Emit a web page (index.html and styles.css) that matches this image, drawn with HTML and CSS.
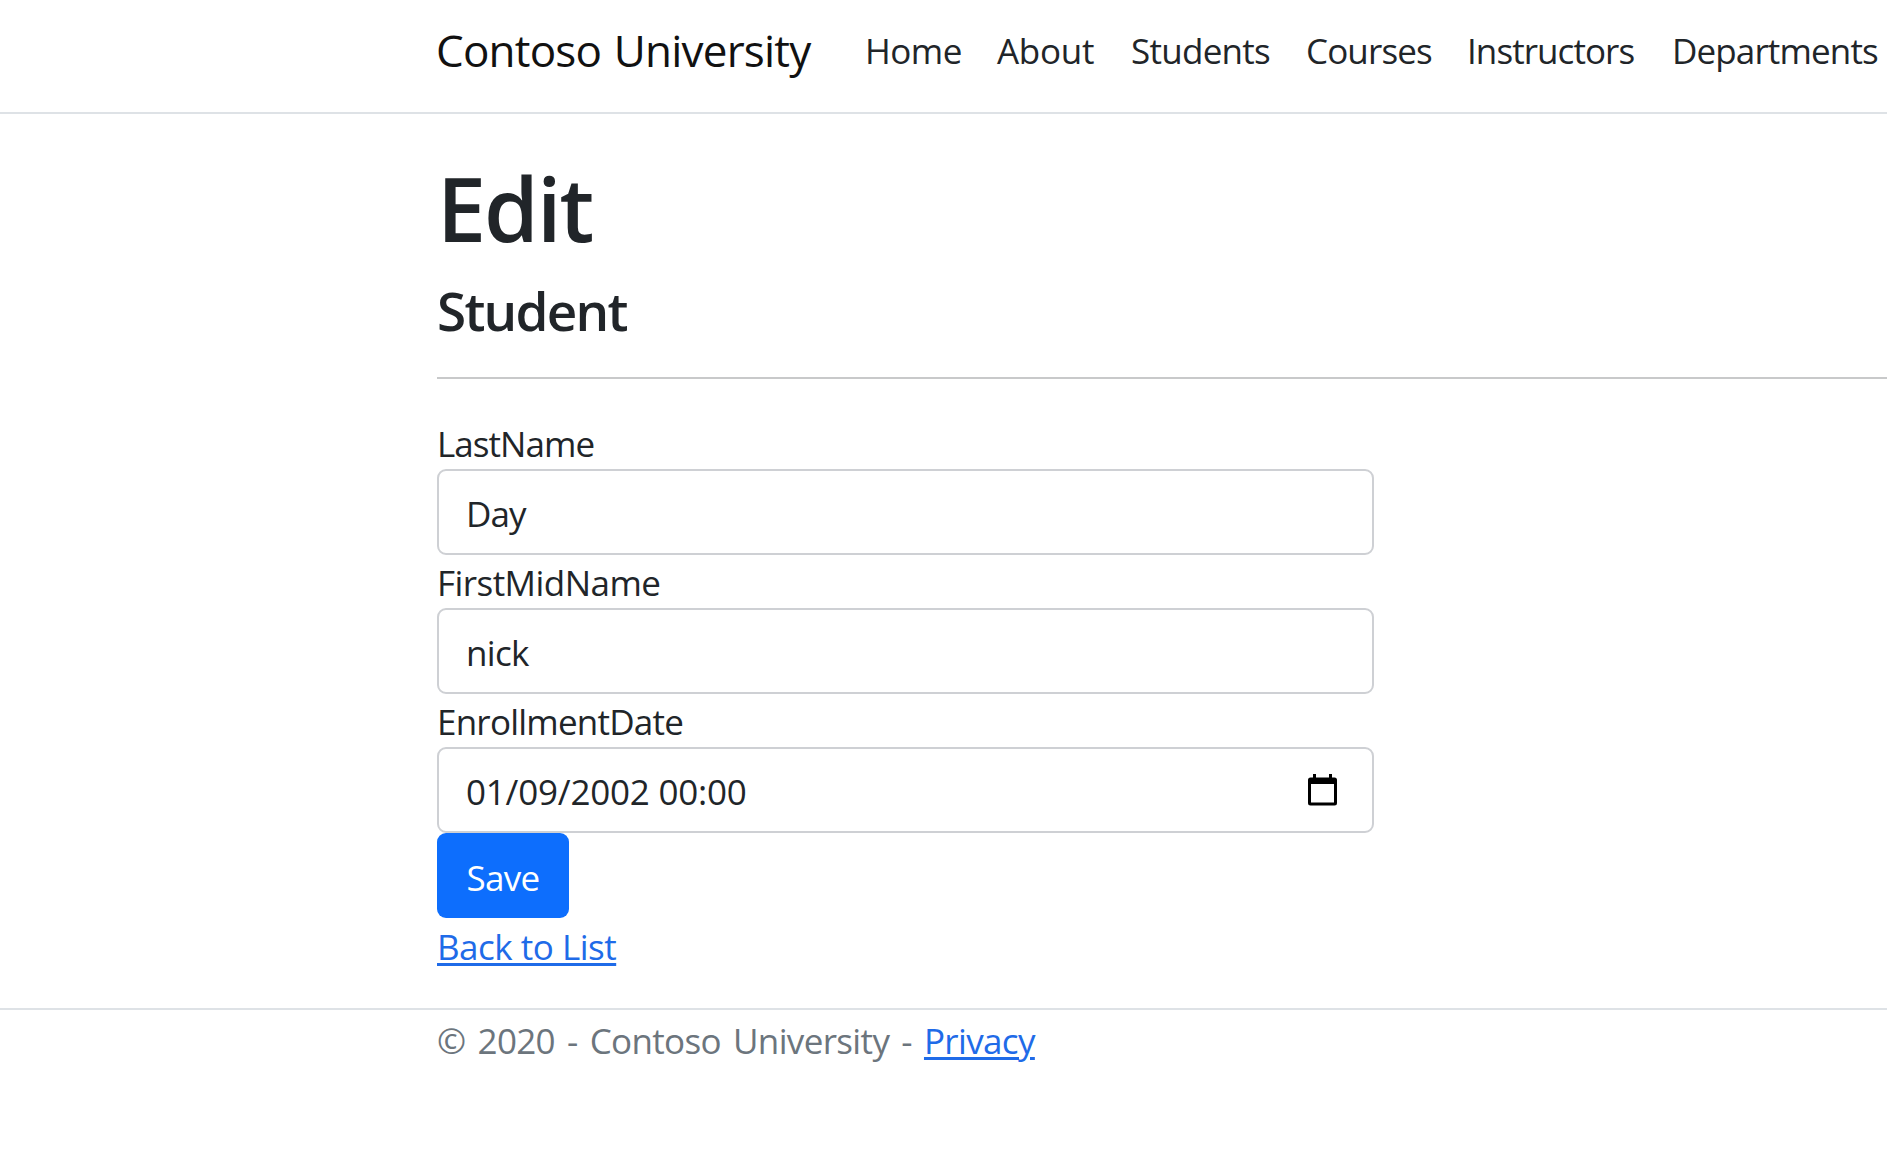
FILE: index.html
```
<!DOCTYPE html>
<html lang="en">
<head>
<meta charset="utf-8">
<title>Edit - Contoso University</title>
<link rel="stylesheet" href="styles.css">
</head>
<body>
<header class="navbar">
  <a class="brand" href="#">Contoso University</a>
  <nav class="nav">
    <a class="nav-home" href="#">Home</a>
    <a class="nav-about" href="#">About</a>
    <a class="nav-students" href="#">Students</a>
    <a class="nav-courses" href="#">Courses</a>
    <a class="nav-instructors" href="#">Instructors</a>
    <a class="nav-departments" href="#">Departments</a>
  </nav>
</header>
<main class="content">
  <h1 class="title">Edit</h1>
  <h4 class="subtitle">Student</h4>
  <hr class="rule">
  <form class="form">
    <label class="label label-last" for="last">LastName</label>
    <div class="control"><input class="field field-last" id="last" value="Day"></div>
    <label class="label label-first" for="first">FirstMidName</label>
    <div class="control"><input class="field field-first" id="first" value="nick"></div>
    <label class="label label-date" for="date">EnrollmentDate</label>
    <div class="control">
      <input class="field field-date" id="date" value="01/09/2002 00:00">
      <svg class="calendar" viewBox="0 0 29 32" aria-hidden="true">
        <path fill-rule="evenodd" d="M5 0h3v3.500h13V0h3v3.500h2.500q2.500 0 2.500 2.500v23q0 2.500-2.500 2.500h-24Q0 31.500 0 29V6q0-2.500 2.500-2.500H5zM3 10v18.500h23V10z"/>
      </svg>
    </div>
    <button class="save" type="button">Save</button>
  </form>
  <a class="link back" href="#">Back to List</a>
</main>
<footer class="footer"><span class="copyright">© 2020 - Contoso University - </span><a class="link privacy" href="#">Privacy</a></footer>
</body>
</html>
```
FILE: styles.css
```
* { box-sizing: border-box; }
body {
  margin: 0;
  background: #fff;
  color: #212529;
  font: 35px/54px "Open Sans", "Noto Sans", sans-serif;
  overflow: hidden;
}
.navbar {
  display: flex;
  align-items: flex-start;
  height: 114px;
  padding: 17px 0 0 436px;
  border-bottom: 2px solid #dee2e6;
}
.navbar a { color: #212529; text-decoration: none; white-space: nowrap; }
.navbar .brand { width: 429px; flex: none; color: #111; font-size: 44px; line-height: 67px; letter-spacing: -.8px; word-spacing: 2px; }
.nav { display: grid; grid-template-columns: 132px 134px 175px 161px 205px 215px; padding-top: 7px; }
.nav-home { letter-spacing: -.5px; }
.nav-about { letter-spacing: -.27px; }
.nav-students { letter-spacing: -.73px; }
.nav-courses { letter-spacing: -.87px; }
.nav-instructors { letter-spacing: -.93px; }
.nav-departments { letter-spacing: -.87px; }
.content { height: 894px; padding: 40px 0 0 437px; }
.title { margin: 0; font-size: 88px; font-weight: 600; line-height: 108px; letter-spacing: -2px; height: 124px; }
.subtitle { margin: 0; font-size: 53px; font-weight: 600; line-height: 65px; letter-spacing: -1.75px; height: 99px; }
.rule { margin: 0; border: 0; height: 2px; background: #c8c9ca; }
.form { display: flex; flex-direction: column; align-items: flex-start; padding-top: 37px; }
.label { height: 53px; line-height: 56px; }
.label-last { letter-spacing: -.95px; }
.label-first { letter-spacing: -.55px; }
.label-date { letter-spacing: -.77px; }
.control {
  display: flex;
  align-items: center;
  width: 937px;
  height: 86px;
  border: 2px solid #ced0d4;
  border-radius: 9px;
  padding: 0 35px 0 27px;
}
.field {
  flex: 1;
  min-width: 0;
  height: 82px;
  margin: 0;
  padding: 3px 0 0;
  border: 0;
  outline: 0;
  background: transparent;
  color: #212529;
  font: inherit;
}
.field-last { letter-spacing: -.92px; }
.field-first { letter-spacing: -.7px; }
.field-date { letter-spacing: -.22px; }
.calendar { width: 29px; height: 32px; fill: #000; }
.save {
  width: 132px;
  height: 85px;
  padding: 5px 0 0;
  border: 0;
  border-radius: 9px;
  background: #0d6efd;
  color: #fff;
  font: inherit;
  letter-spacing: -.71px;
}
.link { color: #1f6be8; text-decoration: underline; text-decoration-thickness: 3px; text-underline-offset: 3px; }
.back { display: inline-block; letter-spacing: -.5px; line-height: 58px; }
.footer { height: 153px; padding-left: 437px; border-top: 2px solid #dee2e6; color: #6c757d; line-height: 61px; white-space: pre; }
.copyright { letter-spacing: -.65px; word-spacing: 3.6px; }
.privacy { letter-spacing: -.65px; }
```
